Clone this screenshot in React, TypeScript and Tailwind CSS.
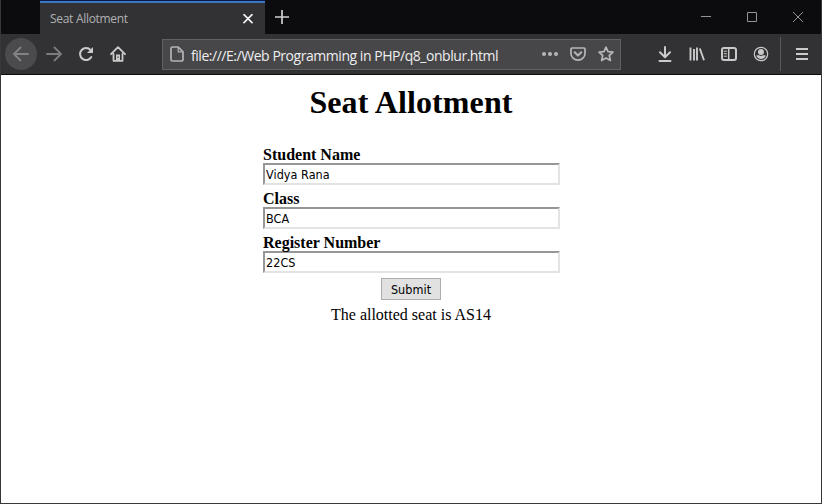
import type { ReactNode } from "react";

function Icon({ children, className = "" }: { children: ReactNode; className?: string }) {
  return (
    <svg
      viewBox="0 0 16 16"
      className={`block size-4 shrink-0 ${className}`}
      fill="none"
      stroke="currentColor"
      strokeWidth="2"
      strokeLinecap="round"
      strokeLinejoin="round"
    >
      {children}
    </svg>
  );
}

function TabStrip() {
  return (
    <div className="flex h-[34px] bg-[#0c0c0e] pl-[39px]">
      <div className="flex h-[34px] w-[225px] flex-col bg-[#323234]">
        <div className="h-px bg-[#0b1a45]" />
        <div className="h-[2px] bg-[#3a78c4]" />
        <div className="flex h-[31px] items-center justify-between pr-[12px] pl-[10px] text-[#b1b1b3]">
          <span className="whitespace-nowrap pt-px font-['Open_Sans','Noto_Sans',sans-serif] text-[12px] tracking-[-0.3px]">
            Seat Allotment
          </span>
          <svg viewBox="0 0 10 10" className="size-[10px] text-[#f0f0f1]" stroke="currentColor" strokeWidth="1.7" strokeLinecap="round">
            <path d="M1 .7l8 8M9 .7L1 8.700" />
          </svg>
        </div>
      </div>
      <svg viewBox="0 0 14 14" className="mt-[10px] ml-[10px] size-[14px] text-[#d0d0d1]" stroke="currentColor" strokeWidth="1.7">
        <path d="M7 0v14M0 7h14" />
      </svg>
      <div className="mt-[12px] mr-[18px] ml-auto flex gap-[36px] text-[#949496]">
        <svg viewBox="0 0 10 10" className="size-[10px]" fill="none" stroke="currentColor">
          <path d="M0 4.5h10" />
        </svg>
        <svg viewBox="0 0 10 10" className="size-[10px]" fill="none" stroke="currentColor">
          <path d="M.5 .5h9v9h-9z" />
        </svg>
        <svg viewBox="0 0 10 10" className="size-[10px]" fill="none" stroke="currentColor">
          <path d="M0 0l10 10M10 0L0 10" />
        </svg>
      </div>
    </div>
  );
}

function NavBar() {
  return (
    <div className="flex h-10 items-center bg-[#323234] pl-[4px] text-[#cacacb]">
      <div className="flex size-8 items-center justify-center rounded-full bg-[#4b4b4d] text-[#838385]">
        <Icon>
          <path d="M15 8H1.4M7.500 1.500L1 8l6.500 6.500" strokeWidth="1.800" />
        </Icon>
      </div>
      <Icon className="ml-[9px] text-[#7c7c7e]">
        <path d="M1 8h13.600M8.500 1.500L15 8l-6.500 6.500" strokeWidth="1.800" />
      </Icon>
      <Icon className="ml-[16px]">
        <path d="M13.300 11A6 6 0 1 1 12.600 4.100" />
        <path d="M15 1v6H9z" fill="currentColor" stroke="none" />
      </Icon>
      <Icon className="ml-[16px]">
        <path d="M1 8.200l7-7 7 7M3.500 8v6.800h9V8" strokeWidth="1.800" />
        <path d="M6 14.500V8.500h4v6z" fill="currentColor" stroke="none" />
        <path d="M8 10.500v1.500" stroke="#323234" strokeWidth="1" strokeLinecap="butt" />
      </Icon>
      <div className="ml-[36px] flex h-[31px] w-[459px] items-center border border-[#616163] bg-[#474749] pr-[6px] pl-[6px]">
        <Icon className="text-[#b4b4b5]">
          <path d="M3.500 1h5.700l4.800 4.800v7.700a1.500 1.500 0 0 1-1.500 1.500h-9A1.500 1.500 0 0 1 2 13.500v-11A1.500 1.500 0 0 1 3.500 1z" strokeWidth="1.700" />
          <path d="M9.200 1.500v4.300h4.300" strokeWidth="1.200" />
        </Icon>
        <span className="ml-[6px] pt-[2px] whitespace-nowrap font-['Open_Sans','Noto_Sans',sans-serif] text-[14px] tracking-[-0.46px] text-[#eeeeef]">
          file:///E:/Web Programming in PHP/q8_onblur.html
        </span>
        <div className="ml-auto flex items-center gap-[12px] text-[#b7b7b8]">
          <Icon>
            <g fill="currentColor" stroke="none">
              <circle cx="2" cy="8" r="2" />
              <circle cx="8" cy="8" r="2" />
              <circle cx="14" cy="8" r="2" />
            </g>
          </Icon>
          <Icon>
            <path d="M2 2h12a1 1 0 0 1 1 1v4.500a7 6.700 0 0 1-14 0V3a1 1 0 0 1 1-1z" strokeWidth="1.700" />
            <path d="M4.700 6.300L8 9.400l3.300-3.100" />
          </Icon>
          <Icon>
            <path d="M8 1.200l2 4.500 5 .500-3.700 3.300 1.100 5L8 12l-4.400 2.500 1.100-5L1 6.200l5-.500z" strokeWidth="1.700" />
          </Icon>
        </div>
      </div>
      <Icon className="ml-[36px]">
        <path d="M8 1v10M3 6.300L8 11.200l5-4.900M2.500 15h11" />
      </Icon>
      <Icon className="ml-[16px]">
        <path d="M1.500 1.500v13M5 3v11.500M8 1.500v13M10.800 2.500L15 14.300" strokeLinecap="butt" strokeWidth="1.900" />
      </Icon>
      <Icon className="ml-[16px]">
        <rect x="1" y="2" width="14" height="12" rx="2" />
        <path d="M7.700 2v12" strokeWidth="1.500" />
        <path d="M3.200 5.200h2.300M3.200 7.700h2.300M3.200 10.200h2.300" strokeWidth="1" />
      </Icon>
      <Icon className="ml-[16px]">
        <circle cx="8" cy="8" r="6.700" strokeWidth="1.200" />
        <circle cx="8" cy="6" r="3" fill="currentColor" stroke="none" />
        <path d="M3.200 9.800c1.200-.800 2.500-.600 3.200-.300 1 .500 2.200.500 3.200 0 .700-.300 2-.500 3.200.300C11.800 11.900 10.200 12.900 8 12.900s-3.800-1-4.800-3.100z" fill="currentColor" stroke="none" />
      </Icon>
      <div className="ml-[11px] h-[34px] w-px bg-[#59595b]" />
      <Icon className="ml-[13px]">
        <path d="M2 3h12M2 8h12M2 13h12" strokeLinecap="butt" />
      </Icon>
    </div>
  );
}

function Field({ label, value }: { label: string; value: string }) {
  return (
    <label className="block h-11">
      <span className="block h-[17px] text-[16px] leading-[18px] font-bold">{label}</span>
      <input
        type="text"
        defaultValue={value}
        className="block h-[22px] w-[297px] border-2 border-t-[#969696] border-r-[#e3e3e3] border-b-[#e3e3e3] border-l-[#969696] bg-white px-px py-0 font-['DejaVu_Sans_Condensed','DejaVu_Sans',sans-serif] text-[12.500px] tracking-[0.05px] [font-stretch:condensed] outline-none"
      />
    </label>
  );
}

export default function App() {
  return (
    <div className="flex h-[504px] w-[822px] flex-col overflow-hidden border-r border-b border-l border-[#39373b] bg-white text-black">
      <TabStrip />
      <NavBar />
      <div className="h-px bg-[#0c0c0d]" />
      <main className="flex flex-col items-center font-['Liberation_Serif','Times_New_Roman',serif]">
        <h1 className="mt-[9px] h-[62px] text-[32px] leading-[37px] font-bold tracking-[0.1px]">Seat Allotment</h1>
        <form className="ml-px flex w-[297px] flex-col" onSubmit={(e) => e.preventDefault()}>
          <Field label="Student Name" value="Vidya Rana" />
          <Field label="Class" value="BCA" />
          <Field label="Register Number" value="22CS" />
          <button
            type="submit"
            className="mr-px h-[22px] w-[60px] self-center border border-[#adadad] bg-[#e1e1e1] pt-px font-['DejaVu_Sans_Condensed','DejaVu_Sans',sans-serif] text-[12.500px] leading-[19px] tracking-[0.05px] [font-stretch:condensed]"
          >
            Submit
          </button>
        </form>
        <p className="mt-[6px] text-[16px] leading-[18px]">The allotted seat is AS14</p>
      </main>
    </div>
  );
}
